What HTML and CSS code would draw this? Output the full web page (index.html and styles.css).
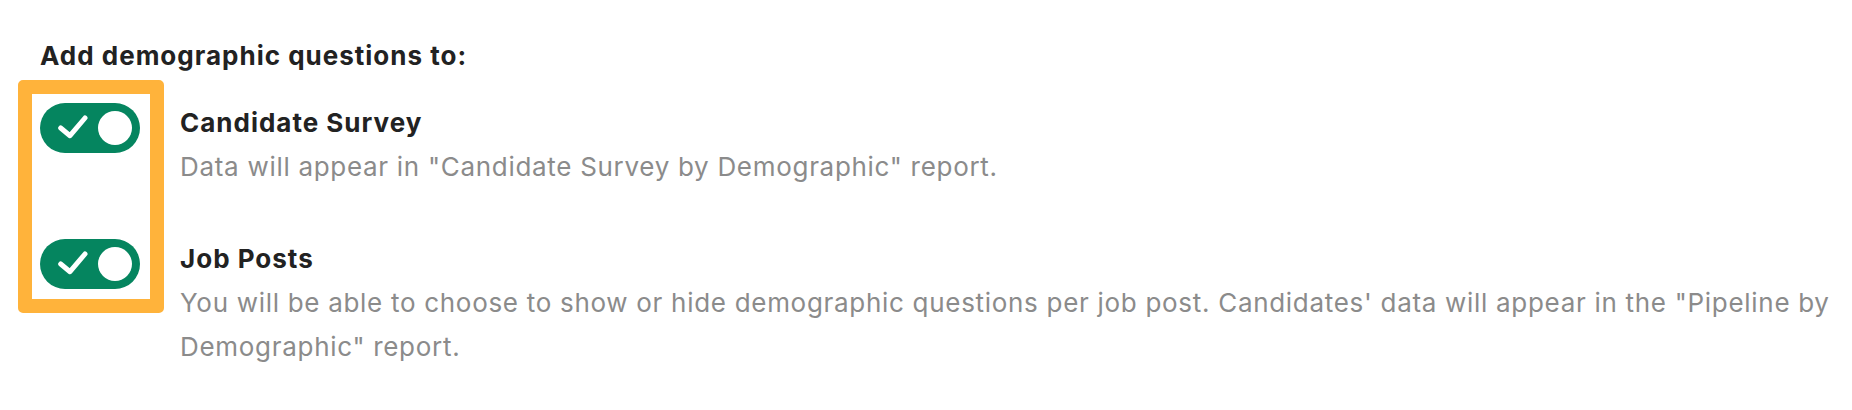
FILE: index.html
```html
<!DOCTYPE html>
<html lang="en">
<head>
<meta charset="utf-8">
<title>Demographic questions</title>
<link rel="stylesheet" href="styles.css">
</head>
<body>
<div class="page">
  <h2 class="heading">Add demographic questions to:</h2>
  <div class="list">
    <div class="highlight"></div>
    <div class="row">
      <div class="toggle" role="switch" aria-checked="true">
        <svg class="check" width="32" height="26" viewBox="0 0 32 26"><path d="M4.7 13 L14 20.7 L29 3" fill="none" stroke="#fff" stroke-width="5" stroke-linecap="round" stroke-linejoin="round"/></svg>
        <span class="knob"></span>
      </div>
      <div class="text">
        <div class="title">Candidate Survey</div>
        <div class="desc">Data will appear in "Candidate Survey by Demographic" report.</div>
      </div>
    </div>
    <div class="row">
      <div class="toggle" role="switch" aria-checked="true">
        <svg class="check" width="32" height="26" viewBox="0 0 32 26"><path d="M4.7 13 L14 20.7 L29 3" fill="none" stroke="#fff" stroke-width="5" stroke-linecap="round" stroke-linejoin="round"/></svg>
        <span class="knob"></span>
      </div>
      <div class="text">
        <div class="title">Job Posts</div>
        <div class="desc">You will be able to choose to show or hide demographic questions per job post. Candidates' data will appear in the "Pipeline by Demographic" report.</div>
      </div>
    </div>
  </div>
</div>
</body>
</html>
```

FILE: styles.css
```css
html, body {
  margin: 0;
  padding: 0;
  background: #ffffff;
}

.page {
  font-family: Inter, "Noto Sans", sans-serif;
  padding: 34px 20px 0 40px;
  color: #222222;
  letter-spacing: 0.7px;
}

.heading {
  margin: 0 0 23px 0;
  font-size: 26px;
  line-height: 44px;
  font-weight: 700;
  letter-spacing: 1px;
}

.list {
  position: relative;
  display: flex;
  flex-direction: column;
  gap: 48px;
}

.highlight {
  position: absolute;
  left: -22px;
  top: -21px;
  width: 146px;
  height: 233px;
  box-sizing: border-box;
  border: 14px solid #ffb33b;
  border-radius: 5px;
  pointer-events: none;
}

.row {
  display: flex;
  align-items: flex-start;
  gap: 40px;
}

.toggle {
  flex: none;
  margin-top: 2px;
  width: 100px;
  height: 50px;
  box-sizing: border-box;
  border-radius: 25px;
  background: #05855f;
  display: flex;
  align-items: center;
  justify-content: space-between;
  padding: 0 8px 0 16px;
}

.check {
  display: block;
}

.knob {
  width: 34px;
  height: 34px;
  border-radius: 50%;
  background: #ffffff;
}

.text {
  font-size: 26px;
  line-height: 44px;
}

.title {
  font-weight: 700;
  color: #222222;
  letter-spacing: 1px;
}

.desc {
  color: #8b8b8b;
}
```
